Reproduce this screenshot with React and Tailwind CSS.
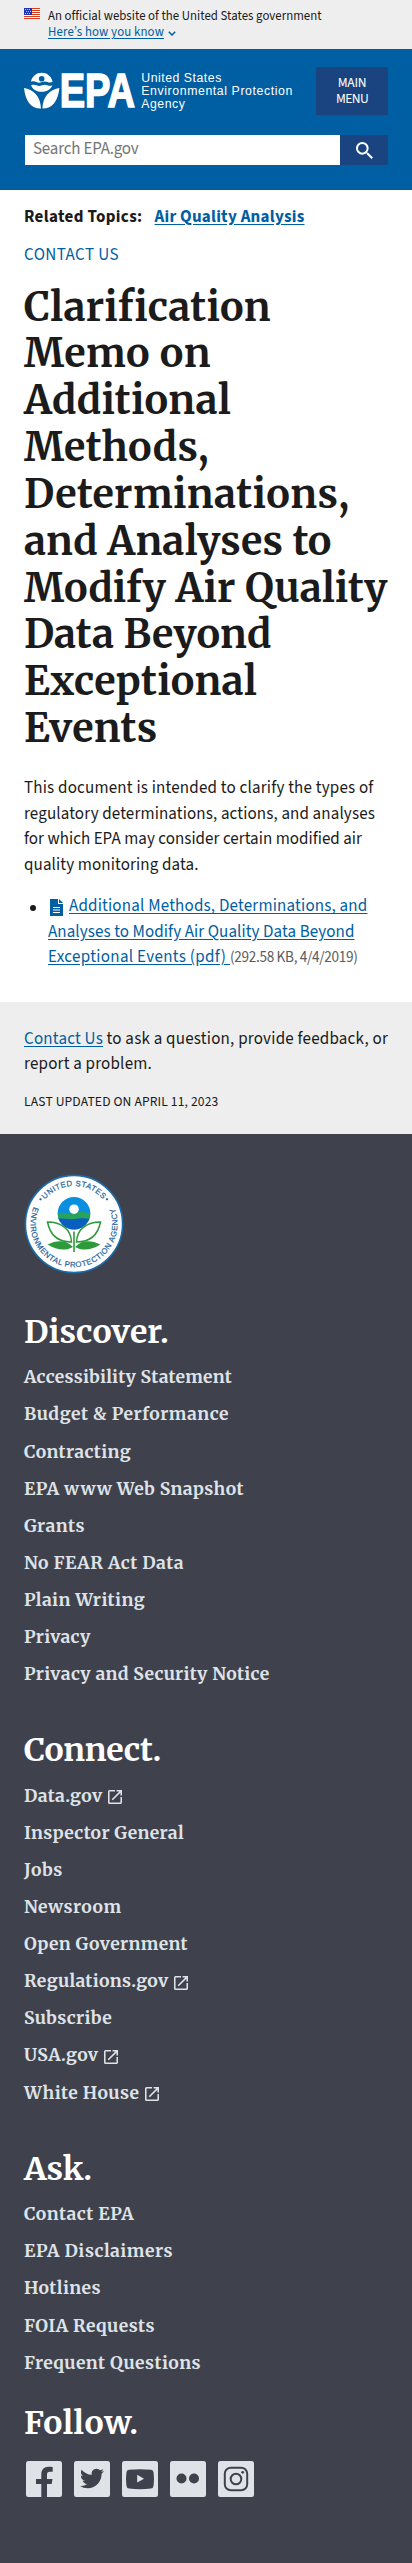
import React, { useLayoutEffect, useRef, useState } from 'react';

const SANS = "font-['Source_Sans_3','Noto_Sans_CJK_SC',sans-serif]";
const SERIF = "font-['Merriweather','DejaVu_Serif',serif]";

// One line of text, tracked so that it fills the given width.
function Fit({ children, width, className = '' }) {
  const ref = useRef(null);
  const [spacing, setSpacing] = useState(0);
  useLayoutEffect(() => {
    const natural = ref.current.getBoundingClientRect().width;
    setSpacing((width - natural) / children.length);
  }, [children, width]);
  return (
    <span ref={ref} className={`inline-block whitespace-pre ${className}`} style={{ letterSpacing: `${spacing}px` }}>
      {children}
    </span>
  );
}

function Lines({ lines }) {
  return lines.map(([text, width]) => (
    <span key={text} className="flex">
      <Fit width={width}>{text}</Fit>
    </span>
  ));
}

const LINK = 'text-[#005ea2] underline underline-offset-2';

function Flag() {
  return (
    <svg viewBox="0 0 16 11" className="mt-2 h-[11px] w-4 shrink-0" shapeRendering="crispEdges">
      <rect width="16" height="11" fill="#fff" />
      {[0, 2, 4, 6, 8, 10].map((y) => (
        <rect key={y} y={y} width="16" height="1" fill="#db3e1f" />
      ))}
      <rect width="8" height="7" fill="#1e33b1" />
      {[1, 3, 5].map((y) =>
        [1, 3, 5].map((x) => <rect key={`${x}-${y}`} x={x + (y === 3 ? 1 : 0)} y={y} width="1" height="1" fill="#c5cdf5" />)
      )}
    </svg>
  );
}

function EpaLogo() {
  return (
    <svg viewBox="0 0 270 44" className="h-11 w-[270px] overflow-visible" fill="#fff">
      <g transform="translate(0 -.8)">
        <path d="M6.900 11.600C8 5.800 12.500 2.500 17.700 2.500s9.800 3.300 10.900 9.100c-1.800.9-3.300.9-5.200.1-2-.7-3.100-.7-5.400.2-2.200.8-3.700.8-5.700-.1-2-.8-3.500-.9-5.400-.2z" />
        <circle cx="17.700" cy="8.500" r="2.800" fill="#005ea2" />
        <path d="M7.100 15c1.800-.7 3.300-.6 5.300.1 2 .8 3.500.8 5.700 0 2-.8 3.300-.8 5.200 0 1.900.7 3.400.7 5.100 0-1.500 4-5.200 6.500-10.700 6.500S8.600 19.200 7.100 15z" />
        <path d="M0 17.700C9 19 16.500 25.500 17 38.200 7 38.400 1.500 31 0 17.700zM35.400 17.700C26.400 19 18.900 25.500 18.400 38.200c10 .2 15.500-7.200 17-20.500z" />
      </g>
      <text transform="translate(35.700 36.300) scale(.8 1)" fontSize="47.500" fontWeight="700" stroke="#fff" strokeWidth="1.600" fontFamily="Liberation Sans">EPA</text>
      <g fontSize="12.300" fontFamily="Liberation Sans">
        <text x="117.300" y="11.400" textLength="80">United States</text>
        <text x="117.300" y="24" textLength="151">Environmental Protection</text>
        <text x="117.300" y="36.500" textLength="43.500">Agency</text>
      </g>
    </svg>
  );
}

function Seal() {
  return (
    <svg viewBox="-50 -50 100 100" className="block h-[100px] w-[100px]">
      <circle r="48.600" fill="#fff" stroke="#1a6cab" strokeWidth="1.600" />
      <defs>
        <path id="seal-top" d="M-38 0A38 38 0 0 1 38 0" />
        <path id="seal-bottom" d="M-39.500 -18.500A43.500 43.500 0 1 0 39.500 -18.500" />
      </defs>
      <g fill="#1c5f9e" stroke="#1c5f9e" strokeWidth=".2" fontSize="7.800" fontFamily="Liberation Sans">
        <text letterSpacing=".45"><textPath href="#seal-top" startOffset="26.500">UNITED STATES</textPath></text>
        <text letterSpacing=".5"><textPath href="#seal-bottom" startOffset="1.500">ENVIRONMENTAL PROTECTION AGENCY</textPath></text>
        <circle cx="-33.500" cy="-24.700" r="1" />
        <circle cx="33" cy="-24.700" r="1" />
      </g>
      <clipPath id="globe"><circle cy="-10.700" r="16.300" /></clipPath>
      <g clipPath="url(#globe)">
        <rect x="-17" y="-28" width="34" height="36" fill="#0a8fe0" />
        <path d="M-17-10.500c7-2 10 1 17-.5s10-1 17 .5v6h-34z" fill="#29a35a" />
        <path d="M-17-5c7-1.500 10 1 17 0s10-1 17 0v14h-34z" fill="#0a5ec0" />
      </g>
      <circle cy="-14.800" r="4.800" fill="#fff" />
      <g fill="#fff" stroke="#2f9a3c" strokeWidth="1.500">
        <path d="M-2.500 18C-16 18-24 11-26.500-2-13-2-3 5-2.500 18zM2.500 18C16 18 24 11 26.500-2 13-2 3 5 2.500 18z" />
        <path d="M0 7.500v20.500" strokeWidth="1.600" />
      </g>
      <path d="M-1 23C-8 15.500-17 16-26.500 20.500-17 26.500-8 27-1 23zM1 23C8 15.500 17 16 26.500 20.500 17 26.500 8 27 1 23z" fill="#2f9a3c" />
    </svg>
  );
}

function Launch() {
  return (
    <svg viewBox="3 3 18 18" className="ml-[5px] mt-[2px] h-[14px] w-[14px]" fill="#dfe2e7">
      <path d="M19 19H5V5h7V3H5a2 2 0 0 0-2 2v14a2 2 0 0 0 2 2h14c1.100 0 2-.9 2-2v-7h-2v7zM14 3v2h3.590l-9.830 9.830 1.410 1.410L19 6.410V10h2V3h-7z" />
    </svg>
  );
}

const discover = [
  ['Accessibility Statement', 208],
  ['Budget & Performance', 205],
  ['Contracting', 107],
  ['EPA www Web Snapshot', 220],
  ['Grants', 61],
  ['No FEAR Act Data', 160],
  ['Plain Writing', 121],
  ['Privacy', 66.5],
  ['Privacy and Security Notice', 245.5],
];
const connect = [
  ['Data.gov', 78.5, true],
  ['Inspector General', 160],
  ['Jobs', 39],
  ['Newsroom', 97.5],
  ['Open Government', 164],
  ['Regulations.gov', 144.5, true],
  ['Subscribe', 88],
  ['USA.gov', 74.5, true],
  ['White House', 115.5, true],
];
const ask = [
  ['Contact EPA', 110],
  ['EPA Disclaimers', 149],
  ['Hotlines', 77],
  ['FOIA Requests', 131],
  ['Frequent Questions', 177],
];

function FooterTitle({ children, width }) {
  return (
    <h2 className="flex h-10 text-[32px] leading-10 font-bold text-white">
      <Fit width={width}>{children}</Fit>
    </h2>
  );
}

function FooterSection({ title, width, links }) {
  return (
    <section>
      <FooterTitle width={width}>{title}</FooterTitle>
      <ul className="mt-[7.7px]">
        {links.map(([label, w, external]) => (
          <li key={label} className="flex h-[37.13px] items-center text-[17.500px] leading-[37.1px] font-bold text-[#dfe2e7]">
            <a href="#" className="flex"><Fit width={w}>{label}</Fit></a>
            {external && <Launch />}
          </li>
        ))}
      </ul>
    </section>
  );
}

function Tile({ children }) {
  return (
    <svg viewBox="0 0 36 36" className="h-9 w-9" fill="#3f424d">
      <rect width="36" height="36" rx="2.500" fill="#dfe2e7" />
      {children}
    </svg>
  );
}

export default function App() {
  return (
    <div className={`${SANS} min-h-[2563px] w-[412px] bg-white text-[17px] text-[#1b1b1b]`}>
      <div className="flex h-[49px] gap-2 bg-[#eeeeee] px-6">
        <Flag />
        <div className="pt-2 text-[12.800px] leading-4">
          <Lines lines={[['An official website of the United States government', 273.5]]} />
          <a href="#" className="flex items-center text-[#005ea2]">
            <Fit width={116} className="underline underline-offset-2">Here’s how you know</Fit>
            <svg viewBox="0 0 8 5" className="ml-1 mt-[3px] h-[5px] w-2" fill="none" stroke="#005ea2" strokeWidth="1.500"><path d="M.8.800 4 4 7.200.800" /></svg>
          </a>
        </div>
      </div>

      <header className="h-[141px] bg-[#005ea2] px-6 pt-[18px]">
        <div className="flex h-12 justify-between">
          <div className="pt-1"><EpaLogo /></div>
          <button className="flex h-12 w-[72px] flex-col items-center justify-center bg-[#1a4480] text-[13.570px] leading-4 text-white">
            <Fit width={28.500}>MAIN</Fit>
            <Fit width={32}>MENU</Fit>
          </button>
        </div>
        <form className="mt-5 flex h-[30px] pl-[1px]">
          <div className="flex h-[30px] w-[315px] items-center bg-white pl-2 text-[16.960px] text-[#757575]">
            <Fit width={105.5}>Search EPA.gov</Fit>
          </div>
          <button type="button" className="flex h-[30px] w-12 items-center justify-center bg-[#1a4480]">
            <svg viewBox="3 3 17.500 17.500" className="h-[17px] w-[17px]" fill="#fff">
              <path d="M15.500 14h-.79l-.28-.27A6.471 6.471 0 0 0 16 9.500 6.500 6.500 0 1 0 9.500 16c1.610 0 3.090-.59 4.230-1.570l.27.28v.79l5 4.990L20.490 19l-4.990-5zm-6 0C7.010 14 5 11.990 5 9.500S7.010 5 9.500 5 14 7.010 14 9.500 11.990 14 9.500 14z" />
            </svg>
          </button>
        </form>
      </header>

      <main className="h-[812px] px-6">
        <div className="flex gap-3 pt-[15px] leading-6 font-bold">
          <Fit width={118.5}>Related Topics:</Fit>
          <a href="#" className="flex"><Fit width={150} className={LINK}>Air Quality Analysis</Fit></a>
        </div>
        <div className="mt-[14px] flex leading-6 text-[#005ea2]"><Fit width={95}>CONTACT US</Fit></div>
        <h1 className={`${SERIF} mt-[16.500px] text-[39.500px] leading-[46.85px] font-bold`}>
          <Lines
            lines={[
              ['Clarification', 247],
              ['Memo on', 187],
              ['Additional', 207],
              ['Methods,', 185],
              ['Determinations,', 325.5],
              ['and Analyses to', 307.5],
              ['Modify Air Quality', 363.5],
              ['Data Beyond', 247.5],
              ['Exceptional', 233],
              ['Events', 133.5],
            ]}
          />
        </h1>
        <p className="mt-[24.500px] leading-[25.4px]">
          <Lines
            lines={[
              ['This document is intended to clarify the types of', 349.5],
              ['regulatory determinations, actions, and analyses', 351],
              ['for which EPA may consider certain modified air', 338],
              ['quality monitoring data.', 174.5],
            ]}
          />
        </p>
        <ul className="mt-[16.4px] leading-[25.4px]">
          <li className="flex">
            <span className="mt-[11px] mr-[12px] ml-[6px] h-[6px] w-[6px] shrink-0 rounded-full bg-[#1b1b1b]" />
            <div>
              <a href="#" className="flex items-center">
                <svg viewBox="0 0 13 17" className="mr-[6px] ml-[2px] h-[17px] w-[13px]">
                  <path d="M0 0h8v5h5v12H0z" fill="#005ea2" />
                  <path d="M9 0l4 4H9z" fill="#005ea2" />
                  <path d="M3 8.500h7M3 11h7M3 13.500h7" stroke="#fff" />
                </svg>
                <Fit width={298.5} className={LINK}>Additional Methods, Determinations, and</Fit>
              </a>
              <a href="#" className="flex"><Fit width={306.5} className={LINK}>Analyses to Modify Air Quality Data Beyond</Fit></a>
              <div className="flex items-baseline">
                <a href="#" className="flex"><Fit width={182} className={LINK}>{'Exceptional Events (pdf) '}</Fit></a>
                <Fit width={127.500} className="text-[15.200px] text-[#5c5c5c]">(292.58 KB, 4/4/2019)</Fit>
              </div>
            </div>
          </li>
        </ul>
      </main>

      <section className="h-[132px] bg-[#eeeeee] px-6 pt-[24.800px] leading-[25.4px]">
        <p>
          <span className="flex">
            <a href="#" className="flex"><Fit width={79} className={LINK}>Contact Us</Fit></a>
            <Fit width={285}>{' to ask a question, provide feedback, or'}</Fit>
          </span>
          <Lines lines={[['report a problem.', 128]]} />
        </p>
        <p className="mt-[11.500px] flex text-[13.570px]"><Fit width={194.500}>LAST UPDATED ON APRIL 11, 2023</Fit></p>
      </section>

      <footer className={`${SERIF} h-[1429px] bg-[#3f424d] px-6 pt-10`}>
        <Seal />
        <div className="mt-[37.600px]">
          <FooterSection title="Discover." links={discover} width={145} />
        </div>
        <div className="mt-[36.400px]">
          <FooterSection title="Connect." links={connect} width={137} />
        </div>
        <div className="mt-[36.900px]">
          <FooterSection title="Ask." links={ask} width={68} />
        </div>
        <div className="mt-[20.800px]">
          <FooterTitle width={114.500}>Follow.</FooterTitle>
        </div>
        <div className="mt-[18px] ml-[2px] flex gap-3">
          <Tile><path d="M15.300 36V23h-5.300v-5h5.300v-4.500C15.300 8.500 18 5.700 22.500 5.700c2 0 3.500.2 4.200.3v4.800h-2.900c-2.200 0-2.800 1.100-2.800 2.800V18h5.500l-.8 5H21v13z" /></Tile>
          <Tile><path transform="translate(6 5.500)" d="M23.950 4.570a10 10 0 0 1-2.820.77 4.960 4.960 0 0 0 2.160-2.720c-.95.550-2 .95-3.130 1.180a4.920 4.920 0 0 0-8.380 4.480C7.690 8.100 4.070 6.130 1.640 3.160a4.800 4.800 0 0 0-.67 2.480c0 1.710.87 3.210 2.190 4.100a4.900 4.900 0 0 1-2.230-.62v.06a4.920 4.920 0 0 0 3.950 4.830 5 5 0 0 1-2.210.08 4.940 4.940 0 0 0 4.600 3.420A9.870 9.870 0 0 1 0 19.540a13.990 13.990 0 0 0 7.550 2.210c9.050 0 14-7.500 14-13.980 0-.21 0-.42-.02-.63a9.940 9.940 0 0 0 2.460-2.550z" /></Tile>
          <Tile><path d="M7 8.800Q18 7.500 29 8.800Q31.300 9 31.600 11.500Q32.400 18 31.600 24.500Q31.300 27.300 29 27.600Q18 28.800 7 27.600Q4.700 27.300 4.400 24.500Q3.600 18 4.400 11.500Q4.700 9 7 8.800z" /><path d="M15.200 13.800v7.800l6.800-3.900z" fill="#dfe2e7" /></Tile>
          <Tile><circle cx="11.500" cy="17.500" r="5" /><circle cx="24" cy="17.500" r="5" /></Tile>
          <Tile><g fill="none" stroke="#3f424d" strokeWidth="2"><rect x="6.800" y="6.800" width="22.400" height="22.400" rx="6" /><circle cx="18" cy="18" r="5.300" /></g><circle cx="24.700" cy="11.300" r="1.400" /></Tile>
        </div>
      </footer>
    </div>
  );
}
